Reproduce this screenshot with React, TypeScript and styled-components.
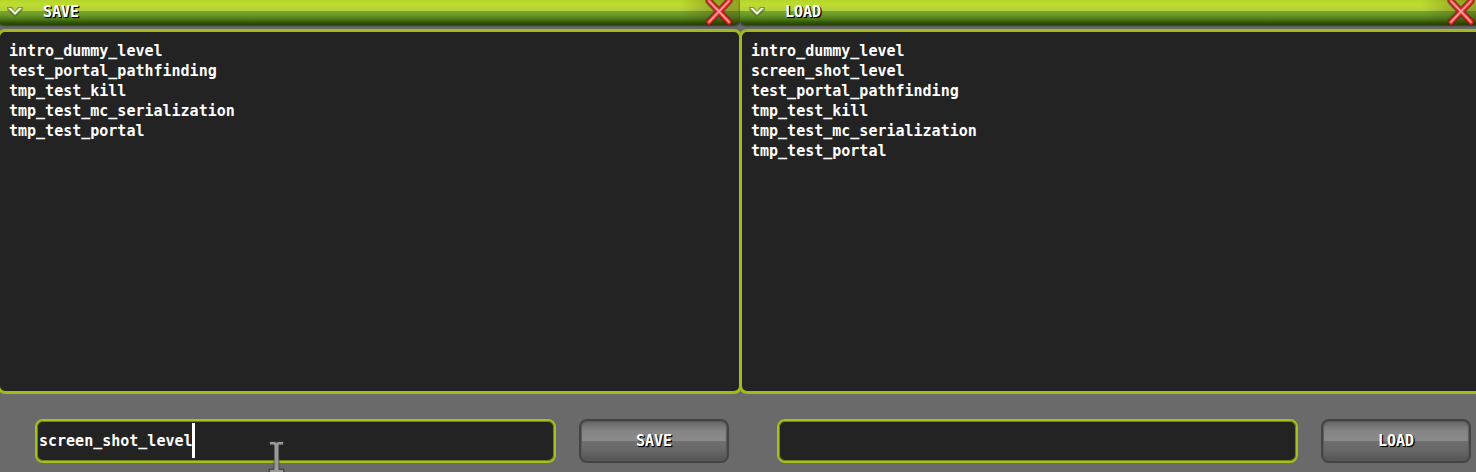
import React from "react";
import styled, { createGlobalStyle } from "styled-components";

const GlobalStyle = createGlobalStyle`
  * { box-sizing: border-box; }
  body {
    margin: 0;
    background: #6a6a6a;
    color: #fff;
    font-family: "DejaVu Sans Mono", "Liberation Mono", monospace;
    font-size: 15px;
    font-weight: 700;
  }
`;

const Desktop = styled.main`
  position: relative;
  display: flex;
  min-height: 100vh;
  overflow: hidden;
`;

const Window = styled.section`
  display: flex;
  flex-direction: column;
  flex: 0 0 calc(50% + 4px);
  background: #6a6a6a;

  &:first-child { margin-left: -2px; }
`;

const TitleBar = styled.header`
  display: flex;
  align-items: center;
  height: 25px;
  padding: 0 8px 1px 8px;
  border-radius: 0 0 5px 5px;
  background:
    linear-gradient(90deg, transparent calc(100% - 60px), rgba(60, 50, 0, 0.3) calc(100% - 20px)),
    linear-gradient(
      #b6d42a 0, #bddc30 4px, #b2d040 11px,
      #7ba52c 11px, #6b9a28 15px, #4f7d18 19px, #2c5006 23px, #284606 25px
    );
  box-shadow: 0 1px 2px #333;
`;

const Title = styled.h1`
  flex: 1;
  margin: 0 0 0 19px;
  font-size: 15px;
  line-height: 20px;
  text-shadow: 1px 1px 1px #000, 1px 1px 0 #000;
`;

const IconButton = styled.button`
  display: flex;
  padding: 0;
  border: 0;
  background: none;

  svg { display: block; overflow: visible; }
`;

const FileList = styled.ul`
  flex: 1;
  margin: 4px -2px 0 -1px;
  padding: 9px 9px 0;
  border: 3px solid #9fbc1c;
  border-radius: 8px;
  background: #232323;
  list-style: none;
`;

const FileItem = styled.li`
  line-height: 20px;
`;

const Footer = styled.form`
  display: flex;
  gap: 23px;
  padding: 25px 11px 9px 37px;
`;

const Field = styled.label`
  position: relative;
  display: flex;
  flex: 1;
`;

const NameInput = styled.input`
  flex: 1;
  min-width: 0;
  height: 44px;
  padding: 0 2px;
  border: 2px solid #a5c11c;
  border-radius: 8px;
  outline: 0;
  background: #232323;
  box-shadow: inset 0 0 0 1px #748418;
  color: #fff;
  font: inherit;
`;

const Caret = styled.span`
  position: absolute;
  top: 4px;
  left: calc(3px + 17ch);
  width: 3px;
  height: 35px;
  background: #fff;
`;

const ActionButton = styled.button`
  width: 150px;
  height: 44px;
  padding: 0;
  border: 2px solid #444;
  border-radius: 8px;
  background: linear-gradient(#676767 0, #858585 10px, #8b8b8b 20px, #707070 20px, #696969 28px, #545454 40px);
  box-shadow: inset 0 0 1px 1px #5a5a5a;
  color: #fff;
  font: inherit;
  text-shadow: 1px 1px 1px #000, 1px 1px 0 #000;
`;

const Pointer = styled.svg`
  position: absolute;
  left: 268px;
  top: 440px;
  pointer-events: none;
`;

function Chevron() {
  return (
    <svg width="18" height="12" viewBox="0 0 18 12" fill="none">
      <path d="M1 1H6L9 5L12 1H17V4L9 11L1 4Z" fill="#46601c" fillOpacity=".5" />
      <path d="M2 2H5L9 6L13 2H16L9 9Z" fill="#eef0ea" />
    </svg>
  );
}

function Cross() {
  return (
    <svg width="26" height="24" viewBox="0 0 26 24" fill="none" strokeLinecap="round">
      <path d="M3 1L23 22M23 1L3 22" stroke="#5c2410" strokeOpacity=".7" strokeWidth="7" />
      <path d="M3 1L23 22M23 1L3 22" stroke="#d81c24" strokeWidth="5" />
      <path d="M3 1L23 22M23 1L3 22" stroke="#f05050" strokeWidth="3" />
      <path d="M3 1L23 22M23 1L3 22" stroke="#ffa8a4" strokeWidth="1.2" />
    </svg>
  );
}

interface FileWindowProps {
  title: string;
  files: string[];
  value?: string;
  editing?: boolean;
}

function FileWindow({ title, files, value = "", editing }: FileWindowProps) {
  return (
    <Window>
      <TitleBar>
        <IconButton aria-label={`Collapse ${title}`}><Chevron /></IconButton>
        <Title>{title}</Title>
        <IconButton aria-label={`Close ${title}`}><Cross /></IconButton>
      </TitleBar>
      <FileList>
        {files.map((file) => <FileItem key={file}>{file}</FileItem>)}
      </FileList>
      <Footer onSubmit={(event) => event.preventDefault()}>
        <Field>
          <NameInput aria-label={`${title} level name`} defaultValue={value} spellCheck={false} />
          {editing && <Caret />}
        </Field>
        <ActionButton type="submit">{title}</ActionButton>
      </Footer>
    </Window>
  );
}

const savedFiles = [
  "intro_dummy_level",
  "test_portal_pathfinding",
  "tmp_test_kill",
  "tmp_test_mc_serialization",
  "tmp_test_portal",
];

const loadFiles = [savedFiles[0], "screen_shot_level", ...savedFiles.slice(1)];

export default function App() {
  return (
    <>
      <GlobalStyle />
      <Desktop>
        <FileWindow title="SAVE" files={savedFiles} value="screen_shot_level" editing />
        <FileWindow title="LOAD" files={loadFiles} />
        <Pointer width="18" height="32" viewBox="0 0 18 32" fill="none" aria-hidden="true">
          <path d="M2 2H7L8.5 3L10 2H15V4H11L10 6V29L11 30H15V32H2V30H6L7 29V6L6 4H2Z" stroke="#333" strokeOpacity=".6" strokeWidth="3" />
          <path d="M2 2H7L8.5 3L10 2H15V4.5H11L10.5 6V29L11 30H15V32H2V30H6L6.5 29V6L6 4.5H2Z" fill="#999" />
        </Pointer>
      </Desktop>
    </>
  );
}
